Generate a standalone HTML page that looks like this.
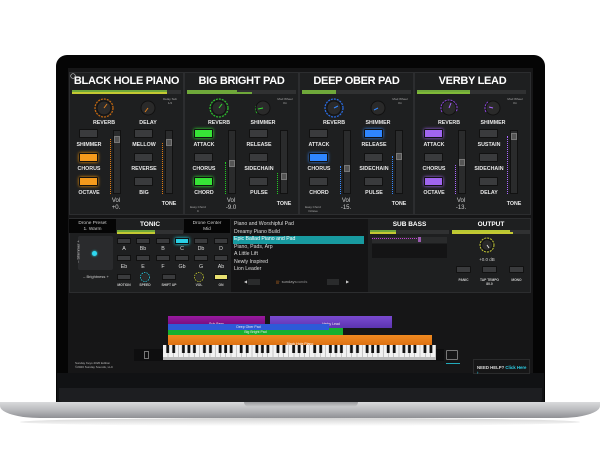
<!DOCTYPE html>
<html><head><meta charset="utf-8">
<style>
*{margin:0;padding:0;box-sizing:border-box}
body{width:600px;height:453px;background:#fff;position:relative;overflow:hidden;font-family:"Liberation Sans",sans-serif;color:#ddd}
.a{position:absolute}
.bezel{left:56px;top:55px;width:489px;height:347px;background:#050505;border-radius:11px 11px 0 0}
.app{left:68px;top:68px;width:465px;height:305px;background:#161617}
.chin{left:57px;top:373px;width:487px;height:29px;background:#111214}
.chin2{left:59px;top:388px;width:483px;height:14px;background:#1d1e21;border-radius:0 0 3px 3px}
.base{left:0;top:402px;width:600px;height:16px;background:linear-gradient(#d9dadc,#b9babd 50%,#8f9094);border-radius:0 0 40px 40px/0 0 12px 12px}
.notch{left:244px;top:402px;width:114px;height:5px;background:linear-gradient(#9a9b9e,#c9cacc);border-radius:0 0 5px 5px}
.shadow{left:20px;top:418px;width:560px;height:8px;background:linear-gradient(rgba(0,0,0,.18),rgba(0,0,0,0));border-radius:50%}
.panel{top:72px;width:115px;height:143px;background:#1e1f20;border:1px solid #2c2d2f}
.title{left:0;top:2px;width:100%;text-align:center;font-weight:bold;font-size:11px;color:#fff;letter-spacing:-.3px;white-space:nowrap}
.mbar{left:2px;top:17px;width:109px;height:4px;background:#303132}
.mbar i{position:absolute;left:0;top:0;height:2px;background:#6fa83a}
.mbar b{position:absolute;left:0;top:2px;height:2px;background:#c4c832}
.lbl{font-size:5.3px;font-weight:bold;color:#e8e8e8;text-align:center;width:40px}
.btn{width:19px;height:9px;background:#3a3b3d;border:1px solid #111;border-radius:1px}
.sl{width:8px;height:64px;background:#2a2b2c;border:1px solid #111}
.sl i{position:absolute;left:0;width:6px;height:7px;background:#555;border:1px solid #777}
.tiny{font-size:3px;color:#aaa;text-align:center}
.vol{font-size:6px;color:#ccc;text-align:center;width:20px;line-height:7px}
.k{width:20px;height:20px}
.sm{font-size:3.3px;color:#ccc;text-align:center;font-weight:bold}
.nb{width:14px;height:6px;background:#3a3b3d;border:1px solid #111}
.nl{font-size:5.3px;color:#ddd;width:14px;text-align:center}
</style></head><body>
<div class="a bezel"></div>
<div class="a app"></div>
<div class="a chin"></div>
<div class="a chin2"></div>
<div class="a shadow"></div>
<div class="a base"></div>
<div class="a notch"></div>

<div class="a panel" style="left:69px">
 <div class="a title">BLACK HOLE PIANO</div>
 <div class="a mbar"><i style="width:95px"></i><b style="width:95px"></b></div>
 <div class="a tiny" style="left:88px;top:24px;width:24px">Delay Sub<br>1/4</div>
 <svg class="a k" style="left:24px;top:25px" viewBox="0 0 20 20"><circle cx="10" cy="10" r="9" fill="none" stroke="#c86a10" stroke-width="1.2" stroke-dasharray="2 1"/><circle cx="10" cy="10" r="7" fill="#2a2a2a" stroke="#111"/><line x1="10" y1="10" x2="13" y2="6" stroke="#e08020"/></svg>
 <svg class="a k" style="left:68px;top:25px" viewBox="0 0 20 20"><circle cx="10" cy="10" r="7" fill="#2a2a2a" stroke="#111"/><line x1="10" y1="10" x2="7" y2="14" stroke="#e08020"/></svg>
 <div class="a lbl" style="left:14px;top:47px">REVERB</div><div class="a lbl" style="left:58px;top:47px">DELAY</div>
 <div class="a btn" style="left:9px;top:56px"></div><div class="a lbl" style="left:-1px;top:69px">SHIMMER</div>
 <div class="a btn" style="left:9px;top:80px;background:#f59a1c;box-shadow:0 0 3px #f90"></div><div class="a lbl" style="left:-1px;top:93px">CHORUS</div>
 <div class="a btn" style="left:9px;top:104px;background:#f59a1c;box-shadow:0 0 3px #f90"></div><div class="a lbl" style="left:-1px;top:117px">OCTAVE</div>
 <div class="a btn" style="left:64px;top:56px"></div><div class="a lbl" style="left:54px;top:69px">MELLOW</div>
 <div class="a btn" style="left:64px;top:80px"></div><div class="a lbl" style="left:54px;top:93px">REVERSE</div>
 <div class="a btn" style="left:64px;top:104px"></div><div class="a lbl" style="left:54px;top:117px">BIG</div>
 <div class="a" style="left:40px;top:66px;width:1px;height:55px;border-left:1px dotted #e07a10"></div>
 <div class="a sl" style="left:43px;top:57px"><i style="top:5px"></i></div>
 <div class="a" style="left:92px;top:70px;width:1px;height:51px;border-left:1px dotted #e07a10"></div>
 <div class="a sl" style="left:95px;top:57px"><i style="top:8px"></i></div>
 <div class="a vol" style="left:36px;top:125px">Vol<br>+0.</div>
 <div class="a lbl" style="left:79px;top:128px">TONE</div>
</div>

<div class="a panel" style="left:184px">
 <div class="a title">BIG BRIGHT PAD</div>
 <div class="a mbar"><i style="width:50px"></i><b style="width:65px;background:#6fa83a"></b></div>
 <div class="a tiny" style="left:88px;top:24px;width:24px">Mod Wheel<br>On</div>
 <svg class="a k" style="left:24px;top:25px" viewBox="0 0 20 20"><circle cx="10" cy="10" r="9" fill="none" stroke="#2cc52c" stroke-width="1.2" stroke-dasharray="2 1"/><circle cx="10" cy="10" r="7" fill="#2a2a2a" stroke="#111"/><line x1="10" y1="10" x2="13" y2="6" stroke="#3d3"/></svg>
 <svg class="a k" style="left:68px;top:25px" viewBox="0 0 20 20"><path d="M4 15 A8 8 0 0 1 3 8" fill="none" stroke="#2cc52c" stroke-width="1.2" stroke-dasharray="2 1"/><circle cx="10" cy="10" r="7" fill="#2a2a2a" stroke="#111"/><line x1="10" y1="10" x2="5" y2="11" stroke="#3d3"/></svg>
 <div class="a lbl" style="left:14px;top:47px">REVERB</div><div class="a lbl" style="left:58px;top:47px">SHIMMER</div>
 <div class="a btn" style="left:9px;top:56px;background:#37e437;box-shadow:0 0 3px #3f3"></div><div class="a lbl" style="left:-1px;top:69px">ATTACK</div>
 <div class="a btn" style="left:9px;top:80px"></div><div class="a lbl" style="left:-1px;top:93px">CHORUS</div>
 <div class="a btn" style="left:9px;top:104px;background:#37e437;box-shadow:0 0 3px #3f3"></div><div class="a lbl" style="left:-1px;top:117px">CHORD</div>
 <div class="a btn" style="left:64px;top:56px"></div><div class="a lbl" style="left:54px;top:69px">RELEASE</div>
 <div class="a btn" style="left:64px;top:80px"></div><div class="a lbl" style="left:54px;top:93px">SIDECHAIN</div>
 <div class="a btn" style="left:64px;top:104px"></div><div class="a lbl" style="left:54px;top:117px">PULSE</div>
 <div class="a" style="left:40px;top:89px;width:1px;height:32px;border-left:1px dotted #2c2"></div>
 <div class="a sl" style="left:43px;top:57px"><i style="top:29px"></i></div>
 <div class="a" style="left:92px;top:100px;width:1px;height:21px;border-left:1px dotted #2c2"></div>
 <div class="a sl" style="left:95px;top:57px"><i style="top:42px"></i></div>
 <div class="a tiny" style="left:2px;top:132px;width:22px">Easy Chord<br>C</div>
 <div class="a vol" style="left:36px;top:125px">Vol<br>-9.0</div>
 <div class="a lbl" style="left:79px;top:128px">TONE</div>
</div>

<div class="a panel" style="left:299px">
 <div class="a title">DEEP OBER PAD</div>
 <div class="a mbar"><i style="width:34px;background:#6fa83a"></i><b style="width:34px;background:#6fa83a"></b></div>
 <div class="a tiny" style="left:88px;top:24px;width:24px">Mod Wheel<br>On</div>
 <svg class="a k" style="left:24px;top:25px" viewBox="0 0 20 20"><circle cx="10" cy="10" r="9" fill="none" stroke="#2a6ee8" stroke-width="1.2" stroke-dasharray="2 1"/><circle cx="10" cy="10" r="7" fill="#2a2a2a" stroke="#111"/><line x1="10" y1="10" x2="14" y2="8" stroke="#38f"/></svg>
 <svg class="a k" style="left:68px;top:25px" viewBox="0 0 20 20"><circle cx="10" cy="10" r="7" fill="#2a2a2a" stroke="#111"/><line x1="10" y1="10" x2="6" y2="12" stroke="#38f"/></svg>
 <div class="a lbl" style="left:14px;top:47px">REVERB</div><div class="a lbl" style="left:58px;top:47px">SHIMMER</div>
 <div class="a btn" style="left:9px;top:56px"></div><div class="a lbl" style="left:-1px;top:69px">ATTACK</div>
 <div class="a btn" style="left:9px;top:80px;background:#2f86ff;box-shadow:0 0 3px #38f"></div><div class="a lbl" style="left:-1px;top:93px">CHORUS</div>
 <div class="a btn" style="left:9px;top:104px"></div><div class="a lbl" style="left:-1px;top:117px">CHORD</div>
 <div class="a btn" style="left:64px;top:56px;background:#2f86ff;box-shadow:0 0 3px #38f"></div><div class="a lbl" style="left:54px;top:69px">RELEASE</div>
 <div class="a btn" style="left:64px;top:80px"></div><div class="a lbl" style="left:54px;top:93px">SIDECHAIN</div>
 <div class="a btn" style="left:64px;top:104px"></div><div class="a lbl" style="left:54px;top:117px">PULSE</div>
 <div class="a" style="left:40px;top:93px;width:1px;height:28px;border-left:1px dotted #38f"></div>
 <div class="a sl" style="left:43px;top:57px"><i style="top:34px"></i></div>
 <div class="a" style="left:92px;top:83px;width:1px;height:38px;border-left:1px dotted #38f"></div>
 <div class="a sl" style="left:95px;top:57px"><i style="top:22px"></i></div>
 <div class="a tiny" style="left:2px;top:132px;width:22px">Easy Chord<br>Octave</div>
 <div class="a vol" style="left:36px;top:125px">Vol<br>-15.</div>
 <div class="a lbl" style="left:79px;top:128px">TONE</div>
</div>

<div class="a panel" style="left:414px;width:117px">
 <div class="a title">VERBY LEAD</div>
 <div class="a mbar"><i style="width:53px"></i><b style="width:53px;background:#7fb838"></b></div>
 <div class="a tiny" style="left:88px;top:24px;width:24px">Mod Wheel<br>On</div>
 <svg class="a k" style="left:24px;top:25px" viewBox="0 0 20 20"><path d="M3 14 A8 8 0 1 1 17 14" fill="none" stroke="#8a45d8" stroke-width="1.2" stroke-dasharray="2 1"/><circle cx="10" cy="10" r="7" fill="#2a2a2a" stroke="#111"/><line x1="10" y1="10" x2="12" y2="5" stroke="#a6f"/></svg>
 <svg class="a k" style="left:68px;top:25px" viewBox="0 0 20 20"><path d="M3 14 A8 8 0 0 1 5 4" fill="none" stroke="#8a45d8" stroke-width="1.2" stroke-dasharray="2 1"/><circle cx="10" cy="10" r="7" fill="#2a2a2a" stroke="#111"/><line x1="10" y1="10" x2="6" y2="9" stroke="#a6f"/></svg>
 <div class="a lbl" style="left:14px;top:47px">REVERB</div><div class="a lbl" style="left:58px;top:47px">SHIMMER</div>
 <div class="a btn" style="left:9px;top:56px;background:#a065ef;box-shadow:0 0 3px #a6f"></div><div class="a lbl" style="left:-1px;top:69px">ATTACK</div>
 <div class="a btn" style="left:9px;top:80px"></div><div class="a lbl" style="left:-1px;top:93px">CHORUS</div>
 <div class="a btn" style="left:9px;top:104px;background:#a065ef;box-shadow:0 0 3px #a6f"></div><div class="a lbl" style="left:-1px;top:117px">OCTAVE</div>
 <div class="a btn" style="left:64px;top:56px"></div><div class="a lbl" style="left:54px;top:69px">SUSTAIN</div>
 <div class="a btn" style="left:64px;top:80px"></div><div class="a lbl" style="left:54px;top:93px">SIDECHAIN</div>
 <div class="a btn" style="left:64px;top:104px"></div><div class="a lbl" style="left:54px;top:117px">DELAY</div>
 <div class="a" style="left:40px;top:92px;width:1px;height:29px;border-left:1px dotted #a6f"></div>
 <div class="a sl" style="left:43px;top:57px"><i style="top:28px"></i></div>
 <div class="a" style="left:92px;top:63px;width:1px;height:58px;border-left:1px dotted #a6f"></div>
 <div class="a sl" style="left:95px;top:57px"><i style="top:2px"></i></div>
 <div class="a vol" style="left:36px;top:125px">Vol<br>-13.</div>
 <div class="a lbl" style="left:79px;top:128px">TONE</div>
</div>
<svg class="a" style="left:70px;top:73px" width="6" height="6" viewBox="0 0 6 6"><circle cx="3" cy="3" r="2.3" fill="none" stroke="#ccc" stroke-width=".7"/></svg>

<div class="a" style="left:69px;top:218px;width:462px;height:75px;background:#1e1f20;border:1px solid #2c2d2f"></div>
<div class="a" style="left:69px;top:219px;width:47px;height:14px;background:#050505;font-size:4.8px;text-align:center;color:#ccc;line-height:5.5px;padding-top:2px">Drone Preset<br>1. Warm</div>
<div class="a" style="left:116px;top:219px;width:68px;text-align:center;font-weight:bold;font-size:6.5px;color:#fff;padding-top:2px">TONIC</div>
<div class="a" style="left:117px;top:230px;width:66px;height:4px;background:#303132"><div style="width:38px;height:2px;background:#6fa83a"></div><div style="width:38px;height:2px;background:#c4c832"></div></div>
<div class="a" style="left:184px;top:219px;width:46px;height:14px;background:#050505;font-size:4.8px;text-align:center;color:#ccc;line-height:5.5px;padding-top:2px">Drone Center<br>Mid</div>
<div class="a" style="left:78px;top:236px;width:35px;height:34px;background:#2a2b2d;border-radius:2px"></div>
<div class="a" style="left:92px;top:251px;width:5px;height:5px;border-radius:50%;background:#2fd8f0;box-shadow:0 0 2px #2ef"></div>
<div class="a" style="left:63px;top:249px;font-size:4px;color:#ccc;transform:rotate(-90deg);width:30px;text-align:center">– Shimmer +</div>
<div class="a" style="left:76px;top:274px;font-size:4px;color:#ccc;width:40px;text-align:center">– Brightness +</div>

<div class="a nb" style="left:117px;top:238px"></div><div class="a nb" style="left:136px;top:238px"></div><div class="a nb" style="left:156px;top:238px"></div><div class="a nb" style="left:175px;top:238px;background:#2ad0e6;box-shadow:0 0 3px #2ef"></div><div class="a nb" style="left:194px;top:238px"></div><div class="a nb" style="left:214px;top:238px"></div>
<div class="a nl" style="left:117px;top:246px">A</div><div class="a nl" style="left:136px;top:246px">Bb</div><div class="a nl" style="left:156px;top:246px">B</div><div class="a nl" style="left:175px;top:246px">C</div><div class="a nl" style="left:194px;top:246px">Db</div><div class="a nl" style="left:214px;top:246px">D</div>
<div class="a nb" style="left:117px;top:255px"></div><div class="a nb" style="left:136px;top:255px"></div><div class="a nb" style="left:156px;top:255px"></div><div class="a nb" style="left:175px;top:255px"></div><div class="a nb" style="left:194px;top:255px"></div><div class="a nb" style="left:214px;top:255px"></div>
<div class="a nl" style="left:117px;top:264px">Eb</div><div class="a nl" style="left:136px;top:264px">E</div><div class="a nl" style="left:156px;top:264px">F</div><div class="a nl" style="left:175px;top:264px">Gb</div><div class="a nl" style="left:194px;top:264px">G</div><div class="a nl" style="left:214px;top:264px">Ab</div>
<div class="a nb" style="left:117px;top:274px"></div><svg class="a" style="left:140px;top:272px" width="10" height="10"><circle cx="5" cy="5" r="4.5" fill="none" stroke="#2ad0e6" stroke-width=".8" stroke-dasharray="1.5 1"/><circle cx="5" cy="5" r="3.5" fill="#2a2a2a"/></svg>
<div class="a nb" style="left:162px;top:274px"></div><svg class="a" style="left:194px;top:272px" width="10" height="10"><circle cx="5" cy="5" r="4.5" fill="none" stroke="#c4c832" stroke-width=".8" stroke-dasharray="1.5 1"/><circle cx="5" cy="5" r="3.5" fill="#2a2a2a"/></svg>
<div class="a nb" style="left:214px;top:274px;background:#e8e070"></div>
<div class="a sm" style="left:113px;top:283px;width:22px">MOTION</div><div class="a sm" style="left:136px;top:283px;width:18px">SPEED</div><div class="a sm" style="left:158px;top:283px;width:22px">SHIFT UP</div><div class="a sm" style="left:190px;top:283px;width:18px">VOL</div><div class="a sm" style="left:212px;top:283px;width:18px">ON</div>

<div class="a" style="left:231px;top:219px;width:137px;height:73px;background:#141415"></div>
<div class="a" style="left:234px;top:221px;font-size:5.2px;color:#ddd;line-height:7.5px">Piano and Worshipful Pad<br>Dreamy Piano Build<br><span style="display:inline-block;background:#189aa0;width:131px;margin-left:-1px;padding-left:1px;color:#fff">Epic Ballad Piano and Pad</span><br>Piano, Pads, Arp<br>A Little Lift<br>Newly Inspired<br>Lion Leader</div>
<div class="a" style="left:248px;top:279px;width:12px;height:6px;background:#2a2b2c"></div><div class="a" style="left:327px;top:279px;width:12px;height:6px;background:#2a2b2c"></div>
<div class="a" style="left:244px;top:279px;font-size:4px;color:#ccc">◀</div><div class="a" style="left:346px;top:279px;font-size:4px;color:#ccc">▶</div>
<div class="a" style="left:276px;top:279px;font-size:4px;color:#c87020">|||· <span style="color:#aaa">sunday</span><span style="color:#888">sounds</span></div>

<div class="a" style="left:369px;top:219px;width:81px;text-align:center;font-weight:bold;font-size:6.5px;color:#fff;padding-top:2px">SUB BASS</div>
<div class="a" style="left:370px;top:230px;width:79px;height:4px;background:#303132"><div style="width:26px;height:2px;background:#6fa83a"></div><div style="width:26px;height:2px;background:#c4c832"></div></div>
<div class="a" style="left:372px;top:237px;width:75px;height:6px;background:#2a2b2c"><div style="width:49px;height:1px;margin-top:1px;border-top:1px dotted #c03cd0"></div></div>
<div class="a" style="left:418px;top:237px;width:3px;height:5px;background:#9a5ab0"></div>
<div class="a" style="left:372px;top:244px;width:75px;height:14px;background:#141415"></div>
<div class="a" style="left:451px;top:219px;width:80px;text-align:center;font-weight:bold;font-size:6.5px;color:#fff;padding-top:2px">OUTPUT</div>
<div class="a" style="left:452px;top:230px;width:78px;height:4px;background:#303132"><div style="width:58px;height:2px;background:#b8c832"></div><div style="width:61px;height:2px;background:#c4c832"></div></div>
<svg class="a" style="left:479px;top:237px" width="16" height="16"><circle cx="8" cy="8" r="7" fill="none" stroke="#c4c832" stroke-width="1" stroke-dasharray="2 1"/><circle cx="8" cy="8" r="5.5" fill="#2a2a2a" stroke="#111"/><line x1="8" y1="8" x2="10" y2="11" stroke="#ddd"/></svg>
<div class="a" style="left:471px;top:257px;width:32px;font-size:4.5px;color:#ccc;text-align:center">+0.0 dB</div>
<div class="a btn" style="left:456px;top:266px;width:15px;height:7px"></div><div class="a btn" style="left:482px;top:266px;width:15px;height:7px"></div><div class="a btn" style="left:509px;top:266px;width:15px;height:7px"></div>
<div class="a sm" style="left:454px;top:278px;width:19px">PANIC</div><div class="a sm" style="left:477px;top:278px;width:25px">TAP TEMPO<br>80.0</div><div class="a sm" style="left:507px;top:278px;width:19px">MONO</div>

<div class="a" style="left:168px;top:316px;width:97px;height:12px;background:linear-gradient(#9a1aa0,#6a0a72);font-size:3.5px;color:#eee;text-align:center;padding-top:6px">Sub Bass</div>
<div class="a" style="left:270px;top:316px;width:122px;height:12px;background:linear-gradient(#7a4ad0,#5c34b0);font-size:3.5px;color:#eee;text-align:center;padding-top:6px">Verby Lead</div>
<div class="a" style="left:168px;top:335px;width:264px;height:13px;background:linear-gradient(#f08a20,#d86a10);font-size:3.5px;color:#fff;text-align:center;padding-top:7px">Black Hole Piano</div>
<div class="a" style="left:168px;top:328px;width:175px;height:7px;background:#15b030;font-size:3.5px;color:#eee;text-align:center;padding-top:2px">Big Bright Pad</div>
<div class="a" style="left:168px;top:324px;width:161px;height:6px;background:#2d5ad8;font-size:3.5px;color:#eee;text-align:center;padding-top:1px">Deep Ober Pad</div>

<div class="a" style="left:134px;top:349px;width:310px;height:12px;background:#0e0e0f"></div>
<div class="a" style="left:144px;top:351px;width:5px;height:8px;border:1px solid #777"></div>
<svg class="a" style="left:163px;top:345px" width="273" height="15" viewBox="0 0 273 15">
<defs><pattern id="w" width="5.25" height="15" patternUnits="userSpaceOnUse"><rect width="5.25" height="15" fill="#f2f2f2"/><rect x="4.75" width=".5" height="15" fill="#999"/></pattern>
<pattern id="b" width="36.75" height="15" patternUnits="userSpaceOnUse"><rect x="3.3" width="2.8" height="8" fill="#111"/><rect x="9.3" width="2.8" height="8" fill="#111"/><rect x="19" width="2.8" height="8" fill="#111"/><rect x="24.5" width="2.8" height="8" fill="#111"/><rect x="30" width="2.8" height="8" fill="#111"/></pattern></defs>
<rect width="273" height="15" fill="url(#w)"/><rect width="273" height="15" fill="url(#b)"/><rect y="12" width="273" height="3" fill="#bbb"/></svg>
<div class="a" style="top:350px;width:12px;height:10px;border:1px solid #777;border-radius:1px;left:446px"></div>
<div class="a" style="left:446px;top:363px;width:14px;height:1px;background:#2ab"></div>
<div class="a" style="left:473px;top:359px;width:57px;height:15px;border:1px solid #2a2b2c;font-size:4.3px;color:#ddd;padding:5px 0 0 3px;font-weight:bold">NEED HELP? <span style="color:#2cd0e8">Click Here ›</span></div>
<div class="a" style="left:75px;top:362px;font-size:3px;color:#bbb;line-height:3.8px">Sunday Keys 2020 Edition<br>©2020 Sunday Sounds, LLC</div>
</body></html>
